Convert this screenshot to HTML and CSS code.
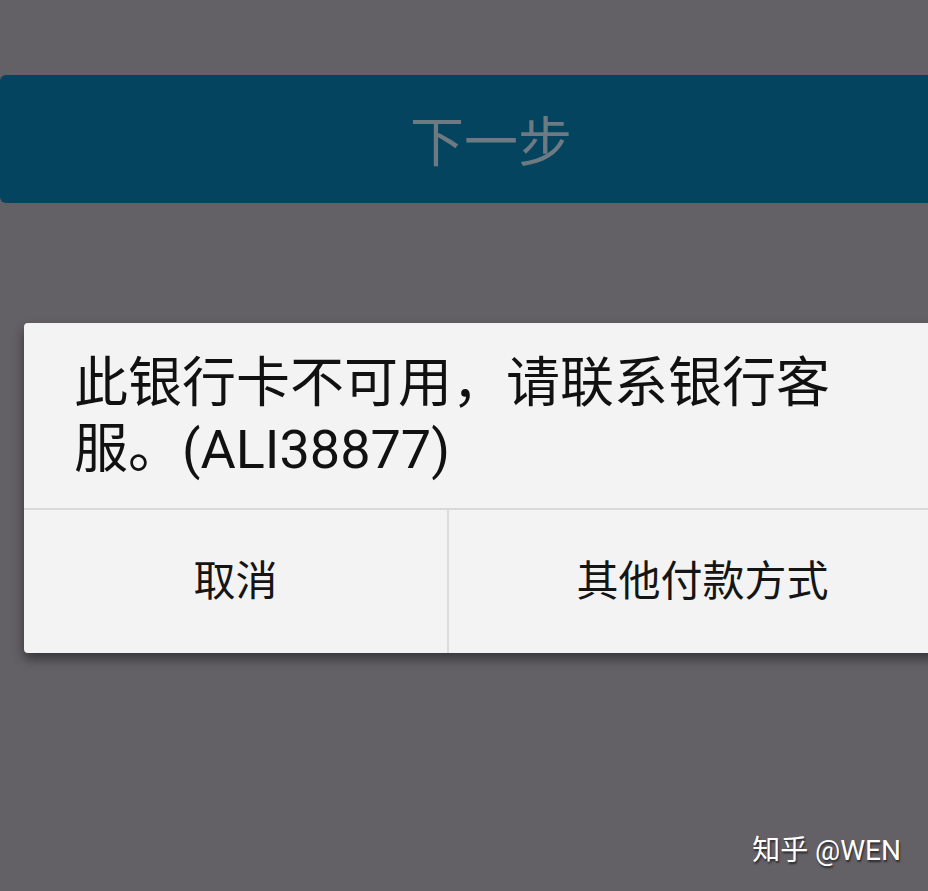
FILE: index.html
```html
<!DOCTYPE html>
<html lang="zh">
<head>
<meta charset="utf-8">
<link rel="stylesheet" href="styles.css">
</head>
<body>
<div class="screen">
  <div class="next-btn">下一步</div>
  <div class="dialog">
    <div class="dialog-msg">此银行卡不可用，请联系银行客服。(ALI38877)</div>
    <div class="dialog-actions">
      <div class="action action-cancel">取消</div>
      <div class="action action-other">其他付款方式</div>
    </div>
  </div>
  <div class="watermark">知乎 @WEN</div>
</div>
</body>
</html>
```

FILE: styles.css
```css
html, body {
  margin: 0;
  padding: 0;
  background: #636166;
  overflow: hidden;
}
.screen {
  width: 928px;
  height: 891px;
  display: flex;
  flex-direction: column;
  overflow: hidden;
  font-family: Roboto, "Noto Sans CJK SC", sans-serif;
}
.next-btn {
  margin-top: 75px;
  width: 940px;
  height: 128px;
  flex-shrink: 0;
  background: #04445f;
  border-radius: 6px;
  color: #6d7a82;
  font-size: 54px;
  display: flex;
  align-items: center;
  justify-content: center;
  padding-left: 42px;
  padding-top: 10px;
  box-sizing: border-box;
  line-height: 1;
}
.dialog {
  margin-top: 120px;
  margin-left: 24px;
  width: 932px;
  flex-shrink: 0;
  background: #f3f3f3;
  border-radius: 4px;
  box-shadow: 0 6px 12px rgba(0,0,0,0.45);
  display: flex;
  flex-direction: column;
}
.dialog-msg {
  padding: 28px 60px 25px 50px;
  font-size: 54px;
  line-height: 66px;
  color: #111;
  height: 132px;
}
.dialog-actions {
  display: flex;
  height: 143px;
  border-top: 2px solid #d9d9d9;
}
.action {
  display: flex;
  align-items: center;
  justify-content: center;
  font-size: 42px;
  color: #151515;
  padding-bottom: 8px;
  box-sizing: border-box;
}
.action-cancel {
  width: 425px;
  flex-shrink: 0;
  border-right: 2px solid #dcdcdc;
}
.action-other {
  flex: 1;
}
.watermark {
  align-self: flex-end;
  margin-top: 181px;
  margin-right: 27px;
  color: #fff;
  font-size: 28px;
  line-height: 34px;
  text-shadow: 1px 2px 2px rgba(0,0,0,0.6);
}
```
